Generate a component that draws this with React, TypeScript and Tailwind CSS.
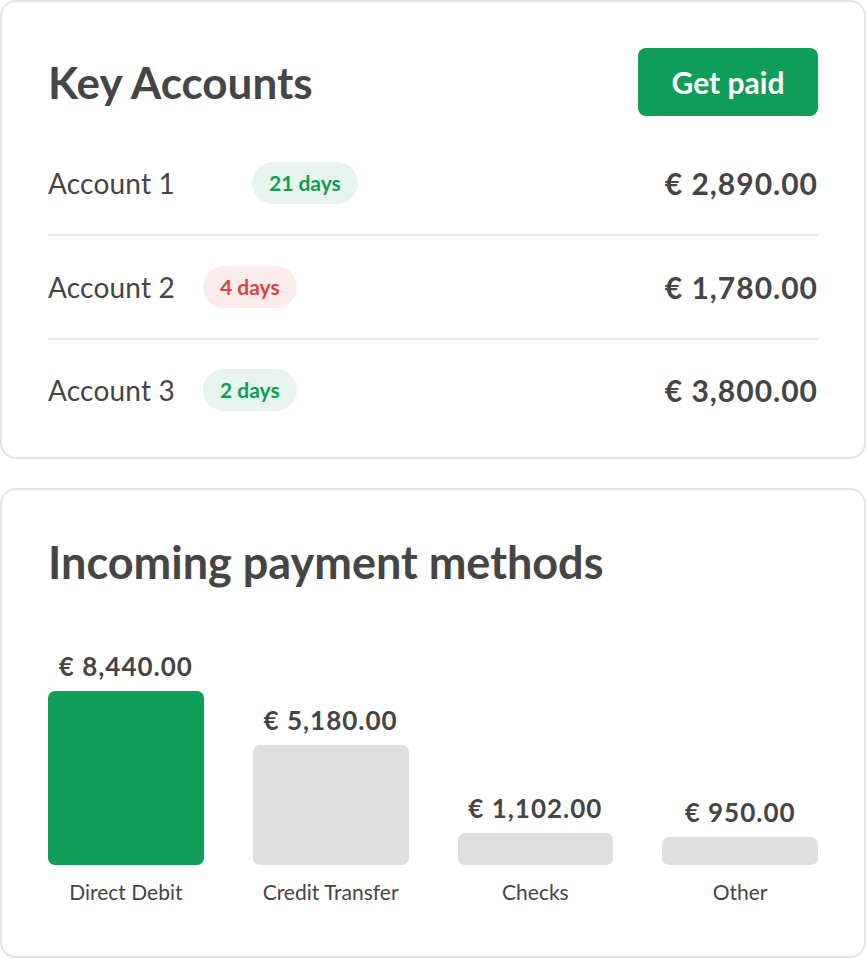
const accounts = [
  { name: 'Account 1', days: '21 days', tone: 'green', amount: '€ 2,890.00', gap: 'ml-[77px]' },
  { name: 'Account 2', days: '4 days', tone: 'red', amount: '€ 1,780.00', gap: 'ml-[28px]' },
  { name: 'Account 3', days: '2 days', tone: 'green', amount: '€ 3,800.00', gap: 'ml-[28px]' },
];

const methods = [
  { label: 'Direct Debit', value: '€ 8,440.00', height: 174, active: true },
  { label: 'Credit Transfer', value: '€ 5,180.00', height: 120, active: false },
  { label: 'Checks', value: '€ 1,102.00', height: 32, active: false },
  { label: 'Other', value: '€ 950.00', height: 28, active: false },
];

export default function App() {
  return (
    <div className="w-[866px] bg-white flex flex-col gap-[29px] text-[#454545] font-['Lato',sans-serif]">
      {/* Key accounts */}
      <div className="rounded-[16px] border-2 border-[#e3e3e3] px-[46px] pt-[46px] pb-[17px]">
        <div className="flex items-center justify-between mb-[16px]">
          <h2 className="text-[44px] font-bold leading-none">Key Accounts</h2>
          <button className="w-[180px] h-[68px] rounded-[8px] bg-[#0f9d58] text-white text-[30px] font-bold">
            Get paid
          </button>
        </div>
        <div>
          {accounts.map((a, i) => (
            <div
              key={a.name}
              className={`flex items-center ${i < accounts.length - 1 ? 'h-[104px] border-b-2 border-[#e8e8e8]' : 'h-[100px]'}`}
            >
              <span className="text-[28px] tracking-[0.2px]">{a.name}</span>
              <span
                className={`${a.gap} h-[42px] px-[17px] rounded-full flex items-center text-[21px] font-bold ${
                  a.tone === 'green' ? 'bg-[#e7f4ed] text-[#109e57]' : 'bg-[#fbebeb] text-[#d64545]'
                }`}
              >
                {a.days}
              </span>
              <span className="ml-auto text-[30px] font-bold tracking-[1px]">{a.amount}</span>
            </div>
          ))}
        </div>
      </div>

      {/* Incoming payment methods */}
      <div className="rounded-[16px] border-2 border-[#e3e3e3] px-[46px] pt-[50px] pb-[54px]">
        <h2 className="text-[45px] font-bold leading-none">Incoming payment methods</h2>
        <div className="mt-[68px] grid grid-cols-4 gap-[49px] items-end">
          {methods.map((m) => (
            <div key={m.label} className="flex flex-col items-center">
              <span className="text-[26px] font-bold leading-none tracking-[1px] mb-[12px]">{m.value}</span>
              <div
                className={`w-full rounded-[7px] ${m.active ? 'bg-[#0f9d58]' : 'bg-[#dedede]'}`}
                style={{ height: m.height }}
              />
              <span className="mt-[16px] text-[21px] leading-none">{m.label}</span>
            </div>
          ))}
        </div>
      </div>
    </div>
  );
}
